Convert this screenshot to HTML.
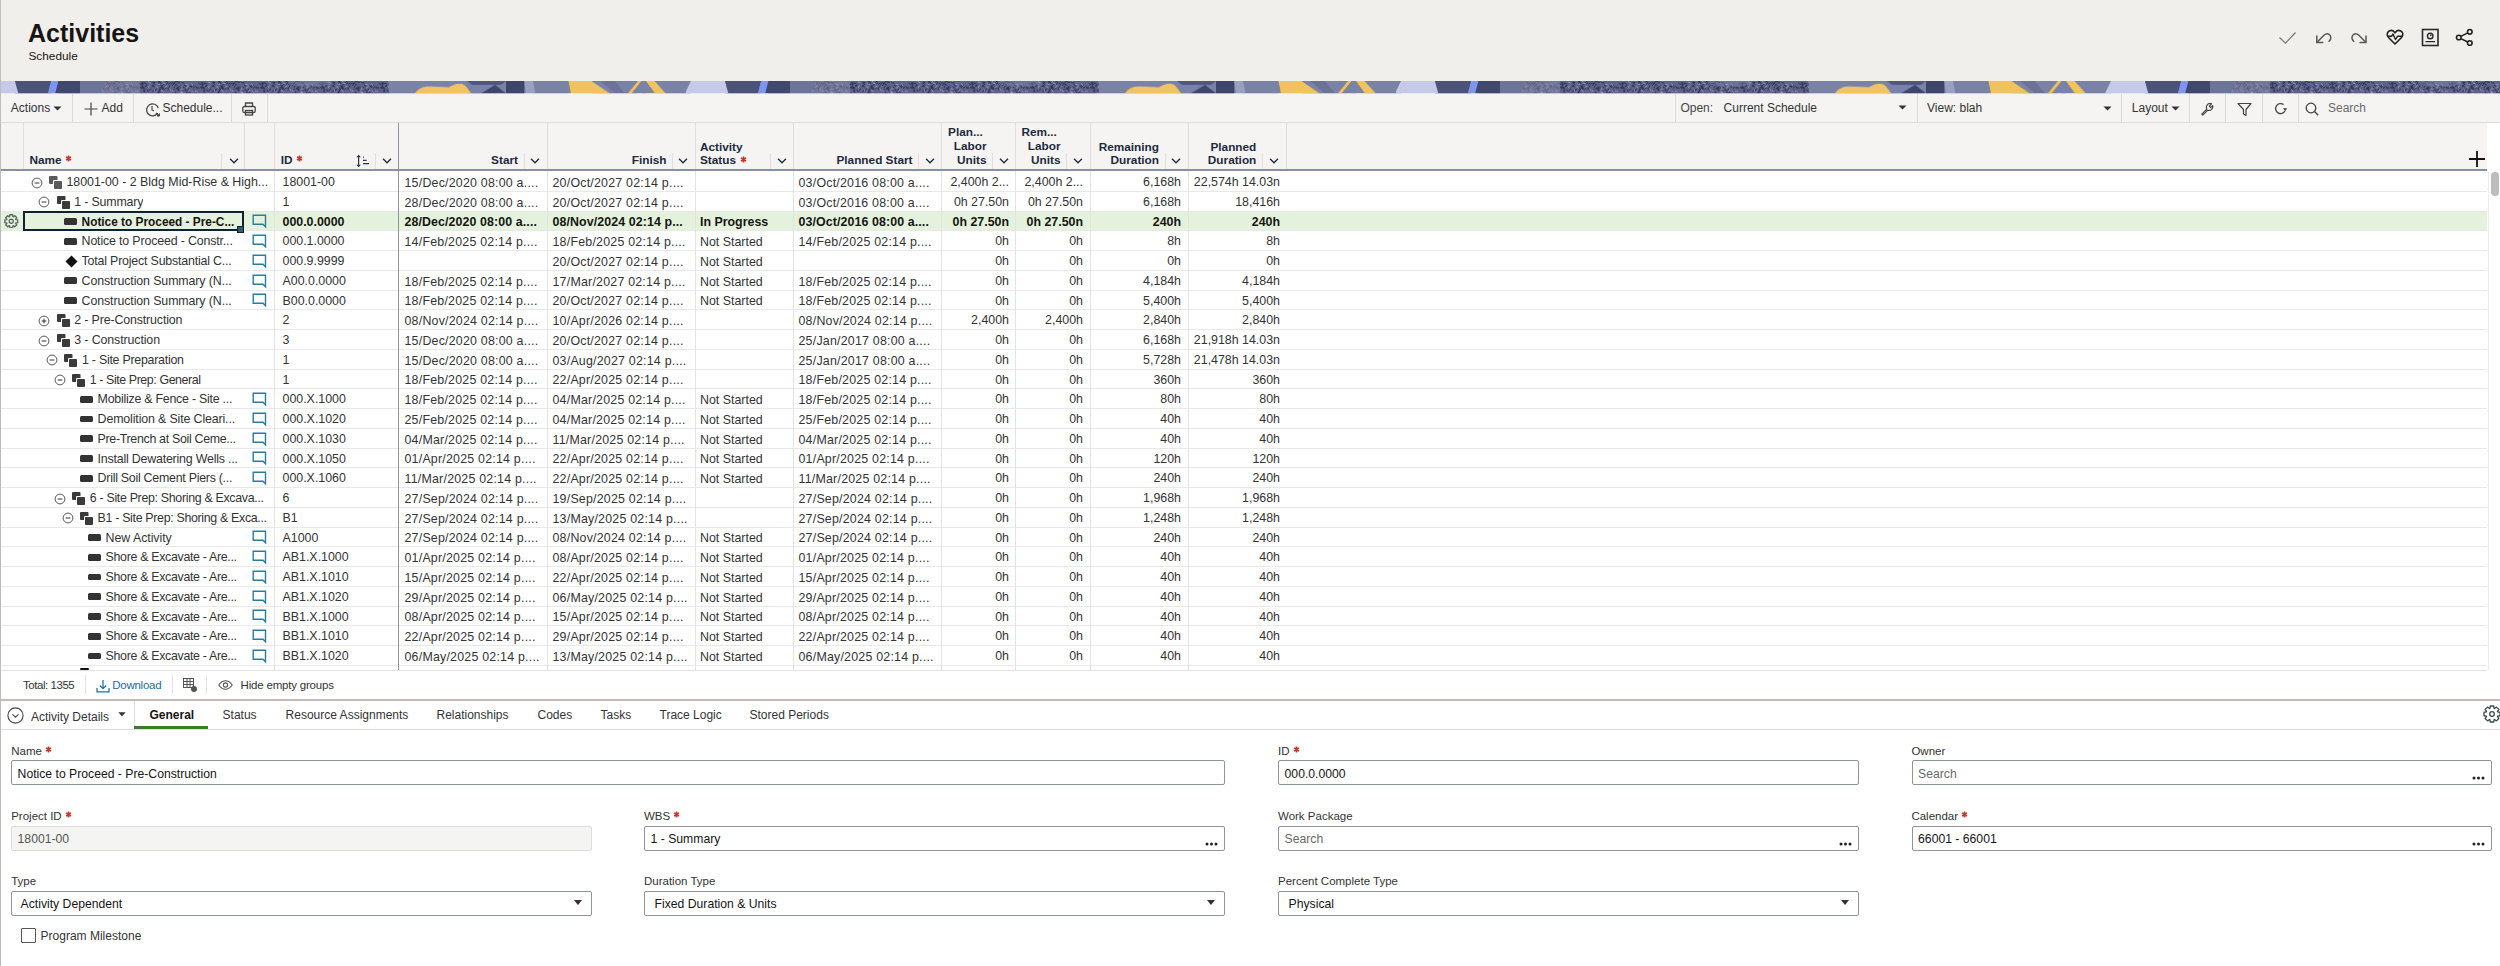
<!DOCTYPE html>
<html><head><meta charset="utf-8"><title>Activities</title>
<style>
*{box-sizing:border-box;margin:0;padding:0}
html,body{width:2500px;height:966px;overflow:hidden;background:#fff;font-family:"Liberation Sans",sans-serif;color:#333}
.abs{position:absolute}
#ph{position:absolute;left:0;top:0;width:2500px;height:82px;background:#f1efec}
#ph h1{position:absolute;left:28px;top:19.3px;font-size:25px;font-weight:bold;color:#161513;letter-spacing:0}
#ph .sub{position:absolute;left:28.5px;top:49px;font-size:11.8px;color:#161513}
#banner{position:absolute;left:0;top:81.4px;width:2500px;height:12.4px}
#tb{position:absolute;left:0;top:94px;width:2500px;height:28.5px;background:#f5f4f2;border-bottom:1px solid #dedcda}
.sep{position:absolute;width:1px;background:#dddbd8}
.tbt{position:absolute;font-size:12px;color:#333;white-space:nowrap}
#lb{position:absolute;left:0;top:0;width:1px;height:966px;background:#bdbdbd;z-index:50}
#th{position:absolute;left:0;top:122.5px;width:2487px;height:47.5px;background:#f5f4f2}
#thb{position:absolute;left:0;top:169.3px;width:2487px;height:2px;background:#87909c}
.hd{position:absolute;font-size:11.8px;font-weight:bold;color:#1d2a3d;line-height:13.7px;white-space:nowrap}
.hd .rq{color:#c7402e;font-size:15px;position:relative;top:2px;line-height:0}
.chev{position:absolute;top:155px;width:10px;height:8px}
.hsub{position:absolute;top:152px;height:18px;width:1px;background:#e0dedb}
.hcl{position:absolute;top:122.5px;height:47px;width:1px;background:#e1dfdc}
#tbody{position:absolute;left:0;top:171.3px;width:2487px;height:499px;overflow:hidden;background:#fff}
.row{position:absolute;left:0;width:2487px;height:19.75px;border-bottom:1px solid #e8e8e8;font-size:12.4px;color:#333}
.row.sel{background:#e4f1dc;font-weight:bold;color:#161513}
.row span{position:absolute;top:3px;white-space:nowrap;line-height:14px}
.bcl{position:absolute;top:0;height:499px;width:1px;background:#e3e3e3;z-index:5}
.row .tg{position:absolute;top:4.5px}
.row .wi{position:absolute;top:4px}
.row .ab{position:absolute;top:6.5px;width:13px;height:6.8px;border-radius:1.5px;background:#333}
.row .msi{position:absolute;top:3.5px}
.row .cm{position:absolute;left:251.5px;top:2.8px}
.c.id{left:282.5px}
.c.st{left:404.5px}
.c.fi{left:552.5px}
.c.as{left:700px}
.c.ps{left:798.5px}
.c.r{text-align:right}
.c.pl{right:1478px}
.c.rl{right:1404px}
.c.rd{right:1306px}
.c.pd{right:1207px}
#ft{position:absolute;left:0;top:670.5px;width:2500px;height:29px;background:#fff}
#ftb{position:absolute;left:0;top:698.8px;width:2500px;height:2px;background:#c2bbb7}
#tabs{position:absolute;left:0;top:700.7px;width:2500px;height:29px;background:#fff;border-bottom:1px solid #dcdcdc}
.tab{position:absolute;top:7px;font-size:12px;color:#333;white-space:nowrap}
.lbl{position:absolute;font-size:11.5px;color:#333;white-space:nowrap}
.lbl .rq{color:#c7402e;font-size:14px;line-height:0;position:relative;top:1px}
.inp{position:absolute;height:25.4px;border:1px solid #8f9496;border-radius:2px;background:#fff;font-size:12.2px;color:#161513;padding:5.8px 0 0 5.6px;white-space:nowrap}
.inp.dis{background:#f4f4f3;border-color:#dcdcdc;color:#555}
.dots{position:absolute;right:6px;top:15px;width:13px;height:4px}
.caret{position:absolute;right:9px;top:8.5px;width:0;height:0;border-left:4.5px solid transparent;border-right:4.5px solid transparent;border-top:5px solid #333}

.row .nm{overflow:hidden}
#sb{position:absolute;left:2490.5px;top:172px;width:8.5px;height:24px;border-radius:4.5px;background:#bdbdbd}
.row .c.st,.row .c.fi,.row .c.ps{letter-spacing:0.22px}
.row.sel .c.st,.row.sel .c.fi,.row.sel .c.ps{letter-spacing:0.1px}

.row .c.st,.row .c.fi,.row .c.ps,.row .c.as{top:3.7px}

</style></head><body>
<div id="lb"></div>
<div id="ph">
  <h1>Activities</h1>
  <div class="sub">Schedule</div>
  <svg class="abs" style="left:2270px;top:22px" width="220" height="32" viewBox="2270 22 220 32">
    <path d="M2279.5 37.5L2285.5 43.2L2295.5 32.5" fill="none" stroke="#7a7a7a" stroke-width="1.3"/>
    <g fill="none" stroke="#585858" stroke-width="1.5">
      <path d="M2316.8 35.5V42.4H2323.3"/>
      <path d="M2317 42.2L2324.2 35C2326.2 33 2329 33.3 2330.2 35.5C2331.3 37.5 2330.8 39.8 2328.6 41.8"/>
      <path d="M2366 35.5V42.4H2359.5"/>
      <path d="M2365.8 42.2L2358.6 35C2356.6 33 2353.8 33.3 2352.6 35.5C2351.5 37.5 2352 39.8 2354.2 41.8"/>
    </g>
    <path d="M2395 44L2388.5 37.5C2386.5 35.5 2386.8 32.2 2389.2 31C2391.5 29.8 2393.8 30.8 2395 32.8C2396.2 30.8 2398.5 29.8 2400.8 31C2403.2 32.2 2403.5 35.5 2401.5 37.5Z" fill="none" stroke="#222" stroke-width="1.6" stroke-linejoin="round"/>
    <path d="M2388 36.3H2391.5L2393 34L2395.5 39.5L2397.5 36.3H2402" fill="none" stroke="#222" stroke-width="1.4" stroke-linejoin="round"/>
    <rect x="2422.5" y="29.5" width="15.5" height="16" fill="none" stroke="#2a2a2a" stroke-width="1.6"/>
    <circle cx="2430.2" cy="36" r="2.8" fill="none" stroke="#2a2a2a" stroke-width="1.4"/>
    <path d="M2430.2 36L2431.5 34.6M2425.5 41.7H2435" stroke="#2a2a2a" stroke-width="1.3"/>
    <g fill="none" stroke="#222" stroke-width="1.6">
      <circle cx="2458.8" cy="37.5" r="2.3"/><circle cx="2469.8" cy="31.8" r="2.3"/><circle cx="2469.8" cy="43" r="2.3"/>
      <path d="M2460.8 36.4L2467.8 32.9M2460.8 38.6L2467.8 42"/>
    </g>
  </svg>
</div>
<svg id="banner" width="2500" height="13" viewBox="0 0 2500 13" preserveAspectRatio="none">
  <defs>
    <pattern id="tx" x="0" y="0" width="60" height="13" patternUnits="userSpaceOnUse"><rect width="60" height="13" fill="#5c628a"/><path d="M19.4 2.0l2 -2M2.9 10.7l2.5 -1.5M21.9 0.8l3 0.8M12.9 1.1l-1.5 2.5M4.2 1.2l-1.5 2.5M3.5 7.4l2.5 1.5M37.8 7.6l2.5 -1.5M34.6 5.2l2.5 1.5M2.8 11.2l1.5 2.5M25.1 7.0l3 0.8M18.5 10.6l2.5 1.5M6.2 7.4l2.5 1.5M22.3 7.1l2.5 -1.5M33.9 8.0l-1.5 2.5M40.8 5.6l1.5 2.5M27.9 12.0l1.5 2.5M18.0 10.3l2 -2M46.8 1.1l1.5 2.5M31.5 11.4l2 -2M26.9 7.9l2.5 -1.5M7.1 5.4l1.5 2.5M9.1 6.4l2.5 -1.5M57.7 1.0l3 0.8M34.4 11.4l1.5 2.5M20.4 4.6l-1.5 2.5M34.8 5.9l2.5 -1.5M56.7 6.2l2 -2M3.9 9.5l1.5 2.5M38.8 12.9l-1.5 2.5M17.1 5.0l2 -2M20.8 12.2l1.5 2.5M10.1 1.5l2.5 -1.5M13.1 3.7l2 -2M14.9 5.1l-1.5 2.5M4.8 5.8l3 0.8M16.7 1.8l-1.5 2.5M51.8 3.6l-1.5 2.5M59.2 8.9l-1.5 2.5M57.5 2.0l2.5 1.5M9.1 8.6l2.5 -1.5M29.1 7.7l1.5 2.5M16.9 1.9l3 0.8M22.2 7.4l2.5 1.5M41.4 6.7l3 0.8M39.3 9.6l-1.5 2.5M54.0 10.1l2 -2M47.9 5.1l-1.5 2.5M23.6 6.3l-1.5 2.5M3.7 0.9l2.5 1.5M26.4 1.4l3 0.8M3.2 0.0l2.5 1.5M32.2 12.3l3 0.8M1.5 11.4l3 0.8M22.6 8.2l1.5 2.5M36.1 6.2l2.5 -1.5M50.9 12.9l-1.5 2.5M28.8 4.1l2.5 1.5M6.1 4.5l1.5 2.5M28.7 9.0l3 0.8M1.4 12.4l3 0.8M21.7 9.0l2.5 -1.5M45.5 3.9l2 -2M51.8 9.1l1.5 2.5M31.1 11.8l1.5 2.5M46.3 6.9l3 0.8M19.8 2.9l2.5 1.5M48.4 10.6l2 -2M48.2 2.6l-1.5 2.5M21.3 0.4l2.5 -1.5M47.4 6.1l2.5 1.5M41.6 12.4l-1.5 2.5M48.5 9.4l1.5 2.5M57.3 4.7l2.5 1.5M6.1 6.1l1.5 2.5M12.3 8.1l3 0.8M50.4 6.2l2 -2M20.6 8.4l2 -2M7.2 5.1l2 -2M45.0 6.2l2.5 1.5M26.0 8.3l2.5 -1.5M48.0 12.6l-1.5 2.5M27.8 9.7l2.5 -1.5M43.5 2.2l2.5 1.5M1.7 7.7l-1.5 2.5M48.4 1.9l3 0.8" stroke="#2a2f4d" stroke-width="1"/><path d="M58.8 8.5l1.5 2.5M9.4 7.1l2.5 -1.5M0.9 12.6l2 -2M6.2 9.7l2.5 1.5M26.0 11.3l2.5 1.5M1.7 2.8l3 0.8M14.4 7.6l1.5 2.5M32.7 10.8l2.5 -1.5M54.6 4.6l-1.5 2.5M39.7 10.6l3 0.8M25.2 11.9l3 0.8M7.8 2.0l3 0.8M1.1 5.7l2.5 1.5M36.5 10.1l2.5 1.5M10.3 6.2l2 -2M7.2 0.8l2 -2M31.1 7.2l2.5 -1.5M53.0 0.7l2.5 1.5M16.6 10.0l3 0.8M27.1 0.4l2.5 -1.5M26.6 8.0l3 0.8M36.4 2.6l1.5 2.5M27.1 6.9l-1.5 2.5M30.5 3.2l3 0.8M52.6 12.2l1.5 2.5" stroke="#a3a9c6" stroke-width="0.8"/></pattern>
    <pattern id="bp" x="-25" y="0" width="710" height="13" patternUnits="userSpaceOnUse">
      <rect x="0" y="0" width="710" height="13" fill="#7a82a5"/>
      <path d="M6 0H40L43.4 13H0Z" fill="#c4cae8"/>
      <path d="M40 0H76.2L73 13H43.4Z" fill="#4c5379"/>
      <path d="M76.2 0H83.4L80.2 13H73Z" fill="#7f95f0"/>
      <path d="M83.4 0H105V13H80.2Z" fill="#414870"/>
      <path d="M105 0H131.4L126 13H105Z" fill="#6d7499"/>
      <path d="M131.4 0H165V13H126Z" fill="#878cab"/><path d="M131.4 0H165V13H126Z" fill="url(#tx)" opacity="0.5"/>
      <rect x="165" y="0" width="249" height="13" fill="url(#tx)"/>
      <ellipse cx="335" cy="2" rx="22" ry="4" fill="#8c92b3" opacity="0.35"/>
      <path d="M440 13C444 7 449 5.5 456 5.8L474 6.5C479 3.5 485 1.5 489 4C492 6 494 10 496 13Z" fill="#f0c462"/>
      <path d="M491.8 0H531L526 4H497Z" fill="#4f5680"/>
      <path d="M506 13L520 4L531 13Z" fill="#3f466d"/>
      <rect x="531" y="0" width="18.3" height="13" fill="#3e456c"/>
      <path d="M549.3 0H558L560.5 13H551Z" fill="#9aa0c0"/>
      <path d="M593.4 0H616.5L634.7 13H596Z" fill="#f1c35d"/>
      <path d="M625 0H640L650 13H640Z" fill="#6c7397"/>
      <path d="M663 0H666.5L656.5 13H653Z" fill="#f1c35d"/>
      <path d="M671 0H679.5L690.7 13H680Z" fill="#f1c35d"/>
    </pattern>
  </defs>
  <rect x="0" y="0" width="2500" height="13" fill="url(#bp)"/>
</svg>
<div id="tb">
  <span class="tbt" style="left:10.8px;top:7px">Actions</span>
  <svg class="abs" style="left:53px;top:12px" width="9" height="5"><path d="M0.5 0.5H8.5L4.5 4.5Z" fill="#333"/></svg>
  <div class="sep" style="left:72px;top:0;height:28px"></div>
  <svg class="abs" style="left:84px;top:8px" width="14" height="14"><path d="M7 0.5V13.5M0.5 7H13.5" stroke="#444" stroke-width="1.2"/></svg>
  <span class="tbt" style="left:101.6px;top:7px">Add</span>
  <div class="sep" style="left:133px;top:0;height:28px"></div>
  <svg class="abs" style="left:144.5px;top:7.5px" width="16" height="16" viewBox="0 0 16 16"><path d="M12.6 11.2A6 6 0 1 1 13.3 6" fill="none" stroke="#444" stroke-width="1.3"/><path d="M7 4V8L9 9" fill="none" stroke="#444" stroke-width="1.2"/><path d="M11 11L14 14" stroke="#444" stroke-width="1.5"/><path d="M12 14H14.5V11.5" fill="#444" stroke="#444" stroke-width="1"/></svg>
  <span class="tbt" style="left:162.5px;top:7px">Schedule...</span>
  <div class="sep" style="left:231px;top:0;height:28px"></div>
  <svg class="abs" style="left:241.5px;top:7.5px" width="14" height="14" viewBox="0 0 14 14"><g fill="none" stroke="#444" stroke-width="1.3"><path d="M3.5 4.5V1H10.5V4.5"/><rect x="0.8" y="4.5" width="12.4" height="6" rx="1.5"/><rect x="3.5" y="8.5" width="7" height="4.5"/></g></svg>
  <div class="sep" style="left:267px;top:0;height:28px"></div>

  <div class="sep" style="left:1675px;top:0;height:28px"></div>
  <span class="tbt" style="left:1680.4px;top:7px;color:#444">Open:</span>
  <span class="tbt" style="left:1723.6px;top:7px">Current Schedule</span>
  <svg class="abs" style="left:1898px;top:10.5px" width="9" height="5"><path d="M0.5 0.5H8.5L4.5 4.5Z" fill="#333"/></svg>
  <div class="sep" style="left:1916.5px;top:0;height:28px"></div>
  <span class="tbt" style="left:1927px;top:7px">View: blah</span>
  <svg class="abs" style="left:2102.5px;top:12px" width="9" height="5"><path d="M0.5 0.5H8.5L4.5 4.5Z" fill="#333"/></svg>
  <div class="sep" style="left:2121px;top:0;height:28px"></div>
  <span class="tbt" style="left:2131.8px;top:7px">Layout</span>
  <svg class="abs" style="left:2170.5px;top:12px" width="9" height="5"><path d="M0.5 0.5H8.5L4.5 4.5Z" fill="#333"/></svg>
  <div class="sep" style="left:2188.5px;top:0;height:28px"></div>
  <svg class="abs" style="left:2200px;top:7.5px" width="15" height="15" viewBox="0 0 15 15"><path d="M1.8 12.2L6.8 7.2A3.8 3.8 0 0 1 11.5 1.8L9.3 4L10.6 5.7L12.7 3.6A3.8 3.8 0 0 1 7.8 8.2L2.8 13.2Z" fill="none" stroke="#444" stroke-width="1.2" stroke-linejoin="round"/></svg>
  <div class="sep" style="left:2225px;top:0;height:28px"></div>
  <svg class="abs" style="left:2236.5px;top:7.5px" width="15" height="15" viewBox="0 0 15 15"><path d="M1 1.5H14L9 7.5V13.5L6.5 12V7.5Z" fill="none" stroke="#444" stroke-width="1.2" stroke-linejoin="round"/></svg>
  <div class="sep" style="left:2262px;top:0;height:28px"></div>
  <svg class="abs" style="left:2273px;top:8px" width="15" height="14" viewBox="0 0 15 14"><path d="M10.6 2.6A5 5 0 1 0 12 9" fill="none" stroke="#444" stroke-width="1.3"/><path d="M10 6.3H14.2L12.1 9.2Z" fill="#444"/></svg>
  <div class="sep" style="left:2298px;top:0;height:28px"></div>
  <svg class="abs" style="left:2304.5px;top:8px" width="15" height="15" viewBox="0 0 15 15"><circle cx="6" cy="6" r="4.8" fill="none" stroke="#444" stroke-width="1.3"/><path d="M9.5 9.5L13.2 13.2" stroke="#444" stroke-width="1.4"/></svg>
  <span class="tbt" style="left:2328px;top:7px;color:#6a6a6a">Search</span>
</div>

<div id="th">
<div class="abs" style="left:23.0px;top:0;width:1px;height:47px;background:#e0dedb"></div>
<div class="abs" style="left:244.2px;top:0;width:1px;height:47px;background:#e0dedb"></div>
<div class="abs" style="left:274.4px;top:0;width:1px;height:47px;background:#e0dedb"></div>
<div class="abs" style="left:547.4px;top:0;width:1px;height:47px;background:#e0dedb"></div>
<div class="abs" style="left:695.0px;top:0;width:1px;height:47px;background:#e0dedb"></div>
<div class="abs" style="left:793.0px;top:0;width:1px;height:47px;background:#e0dedb"></div>
<div class="abs" style="left:941.0px;top:0;width:1px;height:47px;background:#e0dedb"></div>
<div class="abs" style="left:1015.0px;top:0;width:1px;height:47px;background:#e0dedb"></div>
<div class="abs" style="left:1089.5px;top:0;width:1px;height:47px;background:#e0dedb"></div>
<div class="abs" style="left:1187.5px;top:0;width:1px;height:47px;background:#e0dedb"></div>
<div class="abs" style="left:1286.0px;top:0;width:1px;height:47px;background:#e0dedb"></div>
<div class="abs" style="left:398px;top:0;width:1.3px;height:48px;background:#8c95a1"></div>
<div class="abs" style="left:221.4px;top:30px;width:1px;height:16px;background:#e2e0dd"></div>
<svg class="abs" style="left:228.5px;top:35.8px" width="10" height="6" viewBox="0 0 10 6"><path d="M1 0.8L5 4.8L9 0.8" fill="none" stroke="#1d2a3d" stroke-width="1.3"/></svg>
<div class="abs" style="left:374.8px;top:30px;width:1px;height:16px;background:#e2e0dd"></div>
<svg class="abs" style="left:381.5px;top:35.8px" width="10" height="6" viewBox="0 0 10 6"><path d="M1 0.8L5 4.8L9 0.8" fill="none" stroke="#1d2a3d" stroke-width="1.3"/></svg>
<div class="abs" style="left:523.6px;top:30px;width:1px;height:16px;background:#e2e0dd"></div>
<svg class="abs" style="left:530.0px;top:35.8px" width="10" height="6" viewBox="0 0 10 6"><path d="M1 0.8L5 4.8L9 0.8" fill="none" stroke="#1d2a3d" stroke-width="1.3"/></svg>
<div class="abs" style="left:671.5px;top:30px;width:1px;height:16px;background:#e2e0dd"></div>
<svg class="abs" style="left:678.0px;top:35.8px" width="10" height="6" viewBox="0 0 10 6"><path d="M1 0.8L5 4.8L9 0.8" fill="none" stroke="#1d2a3d" stroke-width="1.3"/></svg>
<div class="abs" style="left:770.0px;top:30px;width:1px;height:16px;background:#e2e0dd"></div>
<svg class="abs" style="left:776.5px;top:35.8px" width="10" height="6" viewBox="0 0 10 6"><path d="M1 0.8L5 4.8L9 0.8" fill="none" stroke="#1d2a3d" stroke-width="1.3"/></svg>
<div class="abs" style="left:918.0px;top:30px;width:1px;height:16px;background:#e2e0dd"></div>
<svg class="abs" style="left:924.5px;top:35.8px" width="10" height="6" viewBox="0 0 10 6"><path d="M1 0.8L5 4.8L9 0.8" fill="none" stroke="#1d2a3d" stroke-width="1.3"/></svg>
<div class="abs" style="left:992.0px;top:30px;width:1px;height:16px;background:#e2e0dd"></div>
<svg class="abs" style="left:998.5px;top:35.8px" width="10" height="6" viewBox="0 0 10 6"><path d="M1 0.8L5 4.8L9 0.8" fill="none" stroke="#1d2a3d" stroke-width="1.3"/></svg>
<div class="abs" style="left:1066.0px;top:30px;width:1px;height:16px;background:#e2e0dd"></div>
<svg class="abs" style="left:1072.5px;top:35.8px" width="10" height="6" viewBox="0 0 10 6"><path d="M1 0.8L5 4.8L9 0.8" fill="none" stroke="#1d2a3d" stroke-width="1.3"/></svg>
<div class="abs" style="left:1165.0px;top:30px;width:1px;height:16px;background:#e2e0dd"></div>
<svg class="abs" style="left:1171.0px;top:35.8px" width="10" height="6" viewBox="0 0 10 6"><path d="M1 0.8L5 4.8L9 0.8" fill="none" stroke="#1d2a3d" stroke-width="1.3"/></svg>
<div class="abs" style="left:1262.2px;top:30px;width:1px;height:16px;background:#e2e0dd"></div>
<svg class="abs" style="left:1268.8px;top:35.8px" width="10" height="6" viewBox="0 0 10 6"><path d="M1 0.8L5 4.8L9 0.8" fill="none" stroke="#1d2a3d" stroke-width="1.3"/></svg>
<div class="hd" style="top:31.0px;left:29.4px;">Name <svg width="7" height="7" viewBox="0 0 7 7" style="vertical-align:top;position:relative;top:1.5px;margin-left:0.5px"><path d="M3.5 0.6V6.4M1 2L6 5M1 5L6 2" stroke="#c0392b" stroke-width="1.7"/></svg></div>
<div class="hd" style="top:31.0px;left:280.7px;">ID <svg width="7" height="7" viewBox="0 0 7 7" style="vertical-align:top;position:relative;top:1.5px;margin-left:0.5px"><path d="M3.5 0.6V6.4M1 2L6 5M1 5L6 2" stroke="#c0392b" stroke-width="1.7"/></svg></div>
<svg class="abs" style="left:354.5px;top:31.5px" width="15" height="14" viewBox="0 0 15 14"><path d="M3.6 1.5V12.5" stroke="#2a3547" stroke-width="1.2"/><path d="M1.3 3.3L3.6 0.8L5.9 3.3ZM1.3 10.7L3.6 13.2L5.9 10.7Z" fill="#2a3547"/><path d="M8 3.2H9M8 6.3H11.5M8 9.6H14" stroke="#2a3547" stroke-width="1.2"/></svg>
<div class="hd" style="top:31.0px;right:1969.0px;text-align:right;">Start</div>
<div class="hd" style="top:31.0px;right:1820.5px;text-align:right;">Finish</div>
<div class="hd" style="top:18.0px;left:700.0px;">Activity<br>Status <svg width="7" height="7" viewBox="0 0 7 7" style="vertical-align:top;position:relative;top:1.5px;margin-left:0.5px"><path d="M3.5 0.6V6.4M1 2L6 5M1 5L6 2" stroke="#c0392b" stroke-width="1.7"/></svg></div>
<div class="hd" style="top:31.0px;right:1574.5px;text-align:right;">Planned Start</div>
<div class="hd" style="top:3.8px;right:1500.5px;text-align:right;"><span style="margin-right:3.7px">Plan...</span><br>Labor<br>Units</div>
<div class="hd" style="top:3.8px;right:1426.5px;text-align:right;"><span style="margin-right:3.7px">Rem...</span><br>Labor<br>Units</div>
<div class="hd" style="top:18.0px;right:1328.0px;text-align:right;">Remaining<br>Duration</div>
<div class="hd" style="top:18.0px;right:1230.7px;text-align:right;">Planned<br>Duration</div>
<svg class="abs" style="left:2468px;top:27.5px" width="18" height="18" viewBox="0 0 18 18"><path d="M9 1V17M1 9H17" stroke="#111" stroke-width="1.8"/></svg>
</div>
<div id="thb"></div>
<div id="tbody">
<div class="bcl" style="left:274.4px"></div>
<div class="bcl" style="left:547.4px"></div>
<div class="bcl" style="left:695.0px"></div>
<div class="bcl" style="left:793.0px"></div>
<div class="bcl" style="left:941.0px"></div>
<div class="bcl" style="left:1015.0px"></div>
<div class="bcl" style="left:1089.5px"></div>
<div class="bcl" style="left:1187.5px"></div>
<div class="bcl" style="left:398px;width:1.3px;background:#8c95a1"></div>
<div class="row" style="top:0.90px"><svg class="tg" style="left:30.6px" width="12" height="12" viewBox="0 0 12 12"><circle cx="6" cy="6" r="4.9" fill="none" stroke="#5a5a5a" stroke-width="1"/><path d="M3.6 6h4.8" stroke="#333" stroke-width="1"/></svg><svg class="wi" style="left:48.8px" width="14" height="14" viewBox="0 0 14 14"><rect x="0" y="0" width="8.5" height="8" rx="1" fill="#5a5a5a"/><rect x="4" y="4" width="9" height="9" rx="1" fill="#fff"/><rect x="5" y="5" width="8" height="8" rx="1" fill="#5a5a5a"/></svg><span class="nm" style="left:66.4px;max-width:202.9px;letter-spacing:0px">18001-00 - 2 Bldg Mid-Rise &amp; High...</span><span class="c id">18001-00</span><span class="c st">15/Dec/2020 08:00 a....</span><span class="c fi">20/Oct/2027 02:14 p....</span><span class="c as"></span><span class="c ps">03/Oct/2016 08:00 a....</span><span class="c r pl">2,400h 2...</span><span class="c r rl">2,400h 2...</span><span class="c r rd">6,168h</span><span class="c r pd">22,574h 14.03n</span></div>
<div class="row" style="top:20.65px"><svg class="tg" style="left:38.4px" width="12" height="12" viewBox="0 0 12 12"><circle cx="6" cy="6" r="4.9" fill="none" stroke="#5a5a5a" stroke-width="1"/><path d="M3.6 6h4.8" stroke="#333" stroke-width="1"/></svg><svg class="wi" style="left:56.6px" width="14" height="14" viewBox="0 0 14 14"><rect x="0" y="0" width="8.5" height="8" rx="1" fill="#3a3a3a"/><rect x="4" y="4" width="9" height="9" rx="1" fill="#fff"/><rect x="5" y="5" width="8" height="8" rx="1" fill="#3a3a3a"/></svg><span class="nm" style="left:74.2px;max-width:195.1px;letter-spacing:-0.17px">1 - Summary</span><span class="c id">1</span><span class="c st">28/Dec/2020 08:00 a....</span><span class="c fi">20/Oct/2027 02:14 p....</span><span class="c as"></span><span class="c ps">03/Oct/2016 08:00 a....</span><span class="c r pl">0h 27.50n</span><span class="c r rl">0h 27.50n</span><span class="c r rd">6,168h</span><span class="c r pd">18,416h</span></div>
<div class="row sel" style="top:40.40px"><span class="ab" style="left:64.3px"></span><span class="nm" style="left:81.6px;font-size:11.85px;letter-spacing:0px">Notice to Proceed - Pre-C...</span><svg class="cm" width="15" height="15" viewBox="0 0 15 15"><path d="M1.2 1.2H13.5V12.8L11 10.2H1.2Z" fill="none" stroke="#2a7c9c" stroke-width="1.4" stroke-linejoin="miter"/></svg><span class="c id">000.0.0000</span><span class="c st">28/Dec/2020 08:00 a....</span><span class="c fi">08/Nov/2024 02:14 p...</span><span class="c as">In Progress</span><span class="c ps">03/Oct/2016 08:00 a....</span><span class="c r pl">0h 27.50n</span><span class="c r rl">0h 27.50n</span><span class="c r rd">240h</span><span class="c r pd">240h</span></div>
<div class="row" style="top:60.15px"><span class="ab" style="left:64.3px"></span><span class="nm" style="left:81.6px;letter-spacing:-0.157px">Notice to Proceed - Constr...</span><svg class="cm" width="15" height="15" viewBox="0 0 15 15"><path d="M1.2 1.2H13.5V12.8L11 10.2H1.2Z" fill="none" stroke="#2a7c9c" stroke-width="1.4" stroke-linejoin="miter"/></svg><span class="c id">000.1.0000</span><span class="c st">14/Feb/2025 02:14 p....</span><span class="c fi">18/Feb/2025 02:14 p....</span><span class="c as">Not Started</span><span class="c ps">14/Feb/2025 02:14 p....</span><span class="c r pl">0h</span><span class="c r rl">0h</span><span class="c r rd">8h</span><span class="c r pd">8h</span></div>
<div class="row" style="top:79.90px"><svg class="msi" style="left:64.8px" width="13" height="13" viewBox="0 0 13 13"><path d="M6.5 0.5L12.5 6.5L6.5 12.5L0.5 6.5Z" fill="#111"/></svg><span class="nm" style="left:81.6px;letter-spacing:-0.19px">Total Project Substantial C...</span><svg class="cm" width="15" height="15" viewBox="0 0 15 15"><path d="M1.2 1.2H13.5V12.8L11 10.2H1.2Z" fill="none" stroke="#2a7c9c" stroke-width="1.4" stroke-linejoin="miter"/></svg><span class="c id">000.9.9999</span><span class="c st"></span><span class="c fi">20/Oct/2027 02:14 p....</span><span class="c as">Not Started</span><span class="c ps"></span><span class="c r pl">0h</span><span class="c r rl">0h</span><span class="c r rd">0h</span><span class="c r pd">0h</span></div>
<div class="row" style="top:99.65px"><span class="ab" style="left:64.3px"></span><span class="nm" style="left:81.6px;letter-spacing:-0.108px">Construction Summary (N...</span><svg class="cm" width="15" height="15" viewBox="0 0 15 15"><path d="M1.2 1.2H13.5V12.8L11 10.2H1.2Z" fill="none" stroke="#2a7c9c" stroke-width="1.4" stroke-linejoin="miter"/></svg><span class="c id">A00.0.0000</span><span class="c st">18/Feb/2025 02:14 p....</span><span class="c fi">17/Mar/2027 02:14 p....</span><span class="c as">Not Started</span><span class="c ps">18/Feb/2025 02:14 p....</span><span class="c r pl">0h</span><span class="c r rl">0h</span><span class="c r rd">4,184h</span><span class="c r pd">4,184h</span></div>
<div class="row" style="top:119.40px"><span class="ab" style="left:64.3px"></span><span class="nm" style="left:81.6px;letter-spacing:-0.108px">Construction Summary (N...</span><svg class="cm" width="15" height="15" viewBox="0 0 15 15"><path d="M1.2 1.2H13.5V12.8L11 10.2H1.2Z" fill="none" stroke="#2a7c9c" stroke-width="1.4" stroke-linejoin="miter"/></svg><span class="c id">B00.0.0000</span><span class="c st">18/Feb/2025 02:14 p....</span><span class="c fi">20/Oct/2027 02:14 p....</span><span class="c as">Not Started</span><span class="c ps">18/Feb/2025 02:14 p....</span><span class="c r pl">0h</span><span class="c r rl">0h</span><span class="c r rd">5,400h</span><span class="c r pd">5,400h</span></div>
<div class="row" style="top:139.15px"><svg class="tg" style="left:38.4px" width="12" height="12" viewBox="0 0 12 12"><circle cx="6" cy="6" r="4.9" fill="none" stroke="#5a5a5a" stroke-width="1"/><path d="M3.6 6h4.8M6 3.6v4.8" stroke="#333" stroke-width="1"/></svg><svg class="wi" style="left:56.6px" width="14" height="14" viewBox="0 0 14 14"><rect x="0" y="0" width="8.5" height="8" rx="1" fill="#3a3a3a"/><rect x="4" y="4" width="9" height="9" rx="1" fill="#fff"/><rect x="5" y="5" width="8" height="8" rx="1" fill="#3a3a3a"/></svg><span class="nm" style="left:74.2px;max-width:195.1px;letter-spacing:-0.137px">2 - Pre-Construction</span><span class="c id">2</span><span class="c st">08/Nov/2024 02:14 p....</span><span class="c fi">10/Apr/2026 02:14 p....</span><span class="c as"></span><span class="c ps">08/Nov/2024 02:14 p....</span><span class="c r pl">2,400h</span><span class="c r rl">2,400h</span><span class="c r rd">2,840h</span><span class="c r pd">2,840h</span></div>
<div class="row" style="top:158.90px"><svg class="tg" style="left:38.4px" width="12" height="12" viewBox="0 0 12 12"><circle cx="6" cy="6" r="4.9" fill="none" stroke="#5a5a5a" stroke-width="1"/><path d="M3.6 6h4.8" stroke="#333" stroke-width="1"/></svg><svg class="wi" style="left:56.6px" width="14" height="14" viewBox="0 0 14 14"><rect x="0" y="0" width="8.5" height="8" rx="1" fill="#3a3a3a"/><rect x="4" y="4" width="9" height="9" rx="1" fill="#fff"/><rect x="5" y="5" width="8" height="8" rx="1" fill="#3a3a3a"/></svg><span class="nm" style="left:74.2px;max-width:195.1px;letter-spacing:-0.107px">3 - Construction</span><span class="c id">3</span><span class="c st">15/Dec/2020 08:00 a....</span><span class="c fi">20/Oct/2027 02:14 p....</span><span class="c as"></span><span class="c ps">25/Jan/2017 08:00 a....</span><span class="c r pl">0h</span><span class="c r rl">0h</span><span class="c r rd">6,168h</span><span class="c r pd">21,918h 14.03n</span></div>
<div class="row" style="top:178.65px"><svg class="tg" style="left:46.2px" width="12" height="12" viewBox="0 0 12 12"><circle cx="6" cy="6" r="4.9" fill="none" stroke="#5a5a5a" stroke-width="1"/><path d="M3.6 6h4.8" stroke="#333" stroke-width="1"/></svg><svg class="wi" style="left:64.4px" width="14" height="14" viewBox="0 0 14 14"><rect x="0" y="0" width="8.5" height="8" rx="1" fill="#3a3a3a"/><rect x="4" y="4" width="9" height="9" rx="1" fill="#fff"/><rect x="5" y="5" width="8" height="8" rx="1" fill="#3a3a3a"/></svg><span class="nm" style="left:82.0px;max-width:187.3px;letter-spacing:-0.253px">1 - Site Preparation</span><span class="c id">1</span><span class="c st">15/Dec/2020 08:00 a....</span><span class="c fi">03/Aug/2027 02:14 p....</span><span class="c as"></span><span class="c ps">25/Jan/2017 08:00 a....</span><span class="c r pl">0h</span><span class="c r rl">0h</span><span class="c r rd">5,728h</span><span class="c r pd">21,478h 14.03n</span></div>
<div class="row" style="top:198.40px"><svg class="tg" style="left:54.0px" width="12" height="12" viewBox="0 0 12 12"><circle cx="6" cy="6" r="4.9" fill="none" stroke="#5a5a5a" stroke-width="1"/><path d="M3.6 6h4.8" stroke="#333" stroke-width="1"/></svg><svg class="wi" style="left:72.2px" width="14" height="14" viewBox="0 0 14 14"><rect x="0" y="0" width="8.5" height="8" rx="1" fill="#3a3a3a"/><rect x="4" y="4" width="9" height="9" rx="1" fill="#fff"/><rect x="5" y="5" width="8" height="8" rx="1" fill="#3a3a3a"/></svg><span class="nm" style="left:89.8px;max-width:179.5px;letter-spacing:-0.41px">1 - Site Prep: General</span><span class="c id">1</span><span class="c st">18/Feb/2025 02:14 p....</span><span class="c fi">22/Apr/2025 02:14 p....</span><span class="c as"></span><span class="c ps">18/Feb/2025 02:14 p....</span><span class="c r pl">0h</span><span class="c r rl">0h</span><span class="c r rd">360h</span><span class="c r pd">360h</span></div>
<div class="row" style="top:218.15px"><span class="ab" style="left:80.3px"></span><span class="nm" style="left:97.6px;letter-spacing:-0.246px">Mobilize &amp; Fence - Site ...</span><svg class="cm" width="15" height="15" viewBox="0 0 15 15"><path d="M1.2 1.2H13.5V12.8L11 10.2H1.2Z" fill="none" stroke="#2a7c9c" stroke-width="1.4" stroke-linejoin="miter"/></svg><span class="c id">000.X.1000</span><span class="c st">18/Feb/2025 02:14 p....</span><span class="c fi">04/Mar/2025 02:14 p....</span><span class="c as">Not Started</span><span class="c ps">18/Feb/2025 02:14 p....</span><span class="c r pl">0h</span><span class="c r rl">0h</span><span class="c r rd">80h</span><span class="c r pd">80h</span></div>
<div class="row" style="top:237.90px"><span class="ab" style="left:80.3px"></span><span class="nm" style="left:97.6px;letter-spacing:-0.138px">Demolition &amp; Site Cleari...</span><svg class="cm" width="15" height="15" viewBox="0 0 15 15"><path d="M1.2 1.2H13.5V12.8L11 10.2H1.2Z" fill="none" stroke="#2a7c9c" stroke-width="1.4" stroke-linejoin="miter"/></svg><span class="c id">000.X.1020</span><span class="c st">25/Feb/2025 02:14 p....</span><span class="c fi">04/Mar/2025 02:14 p....</span><span class="c as">Not Started</span><span class="c ps">25/Feb/2025 02:14 p....</span><span class="c r pl">0h</span><span class="c r rl">0h</span><span class="c r rd">40h</span><span class="c r pd">40h</span></div>
<div class="row" style="top:257.65px"><span class="ab" style="left:80.3px"></span><span class="nm" style="left:97.6px;letter-spacing:-0.312px">Pre-Trench at Soil Ceme...</span><svg class="cm" width="15" height="15" viewBox="0 0 15 15"><path d="M1.2 1.2H13.5V12.8L11 10.2H1.2Z" fill="none" stroke="#2a7c9c" stroke-width="1.4" stroke-linejoin="miter"/></svg><span class="c id">000.X.1030</span><span class="c st">04/Mar/2025 02:14 p....</span><span class="c fi">11/Mar/2025 02:14 p....</span><span class="c as">Not Started</span><span class="c ps">04/Mar/2025 02:14 p....</span><span class="c r pl">0h</span><span class="c r rl">0h</span><span class="c r rd">40h</span><span class="c r pd">40h</span></div>
<div class="row" style="top:277.40px"><span class="ab" style="left:80.3px"></span><span class="nm" style="left:97.6px;letter-spacing:-0.2px">Install Dewatering Wells ...</span><svg class="cm" width="15" height="15" viewBox="0 0 15 15"><path d="M1.2 1.2H13.5V12.8L11 10.2H1.2Z" fill="none" stroke="#2a7c9c" stroke-width="1.4" stroke-linejoin="miter"/></svg><span class="c id">000.X.1050</span><span class="c st">01/Apr/2025 02:14 p....</span><span class="c fi">22/Apr/2025 02:14 p....</span><span class="c as">Not Started</span><span class="c ps">01/Apr/2025 02:14 p....</span><span class="c r pl">0h</span><span class="c r rl">0h</span><span class="c r rd">120h</span><span class="c r pd">120h</span></div>
<div class="row" style="top:297.15px"><span class="ab" style="left:80.3px"></span><span class="nm" style="left:97.6px;letter-spacing:-0.259px">Drill Soil Cement Piers (...</span><svg class="cm" width="15" height="15" viewBox="0 0 15 15"><path d="M1.2 1.2H13.5V12.8L11 10.2H1.2Z" fill="none" stroke="#2a7c9c" stroke-width="1.4" stroke-linejoin="miter"/></svg><span class="c id">000.X.1060</span><span class="c st">11/Mar/2025 02:14 p....</span><span class="c fi">22/Apr/2025 02:14 p....</span><span class="c as">Not Started</span><span class="c ps">11/Mar/2025 02:14 p....</span><span class="c r pl">0h</span><span class="c r rl">0h</span><span class="c r rd">240h</span><span class="c r pd">240h</span></div>
<div class="row" style="top:316.90px"><svg class="tg" style="left:54.0px" width="12" height="12" viewBox="0 0 12 12"><circle cx="6" cy="6" r="4.9" fill="none" stroke="#5a5a5a" stroke-width="1"/><path d="M3.6 6h4.8" stroke="#333" stroke-width="1"/></svg><svg class="wi" style="left:72.2px" width="14" height="14" viewBox="0 0 14 14"><rect x="0" y="0" width="8.5" height="8" rx="1" fill="#3a3a3a"/><rect x="4" y="4" width="9" height="9" rx="1" fill="#fff"/><rect x="5" y="5" width="8" height="8" rx="1" fill="#3a3a3a"/></svg><span class="nm" style="left:89.8px;max-width:179.5px;letter-spacing:-0.315px">6 - Site Prep: Shoring &amp; Excava...</span><span class="c id">6</span><span class="c st">27/Sep/2024 02:14 p....</span><span class="c fi">19/Sep/2025 02:14 p....</span><span class="c as"></span><span class="c ps">27/Sep/2024 02:14 p....</span><span class="c r pl">0h</span><span class="c r rl">0h</span><span class="c r rd">1,968h</span><span class="c r pd">1,968h</span></div>
<div class="row" style="top:336.65px"><svg class="tg" style="left:61.8px" width="12" height="12" viewBox="0 0 12 12"><circle cx="6" cy="6" r="4.9" fill="none" stroke="#5a5a5a" stroke-width="1"/><path d="M3.6 6h4.8" stroke="#333" stroke-width="1"/></svg><svg class="wi" style="left:80.0px" width="14" height="14" viewBox="0 0 14 14"><rect x="0" y="0" width="8.5" height="8" rx="1" fill="#3a3a3a"/><rect x="4" y="4" width="9" height="9" rx="1" fill="#fff"/><rect x="5" y="5" width="8" height="8" rx="1" fill="#3a3a3a"/></svg><span class="nm" style="left:97.6px;max-width:171.7px;letter-spacing:-0.322px">B1 - Site Prep: Shoring &amp; Exca...</span><span class="c id">B1</span><span class="c st">27/Sep/2024 02:14 p....</span><span class="c fi">13/May/2025 02:14 p....</span><span class="c as"></span><span class="c ps">27/Sep/2024 02:14 p....</span><span class="c r pl">0h</span><span class="c r rl">0h</span><span class="c r rd">1,248h</span><span class="c r pd">1,248h</span></div>
<div class="row" style="top:356.40px"><span class="ab" style="left:88.3px"></span><span class="nm" style="left:105.6px;letter-spacing:-0.055px">New Activity</span><svg class="cm" width="15" height="15" viewBox="0 0 15 15"><path d="M1.2 1.2H13.5V12.8L11 10.2H1.2Z" fill="none" stroke="#2a7c9c" stroke-width="1.4" stroke-linejoin="miter"/></svg><span class="c id">A1000</span><span class="c st">27/Sep/2024 02:14 p....</span><span class="c fi">08/Nov/2024 02:14 p....</span><span class="c as">Not Started</span><span class="c ps">27/Sep/2024 02:14 p....</span><span class="c r pl">0h</span><span class="c r rl">0h</span><span class="c r rd">240h</span><span class="c r pd">240h</span></div>
<div class="row" style="top:376.15px"><span class="ab" style="left:88.3px"></span><span class="nm" style="left:105.6px;letter-spacing:-0.321px">Shore &amp; Excavate - Are...</span><svg class="cm" width="15" height="15" viewBox="0 0 15 15"><path d="M1.2 1.2H13.5V12.8L11 10.2H1.2Z" fill="none" stroke="#2a7c9c" stroke-width="1.4" stroke-linejoin="miter"/></svg><span class="c id">AB1.X.1000</span><span class="c st">01/Apr/2025 02:14 p....</span><span class="c fi">08/Apr/2025 02:14 p....</span><span class="c as">Not Started</span><span class="c ps">01/Apr/2025 02:14 p....</span><span class="c r pl">0h</span><span class="c r rl">0h</span><span class="c r rd">40h</span><span class="c r pd">40h</span></div>
<div class="row" style="top:395.90px"><span class="ab" style="left:88.3px"></span><span class="nm" style="left:105.6px;letter-spacing:-0.321px">Shore &amp; Excavate - Are...</span><svg class="cm" width="15" height="15" viewBox="0 0 15 15"><path d="M1.2 1.2H13.5V12.8L11 10.2H1.2Z" fill="none" stroke="#2a7c9c" stroke-width="1.4" stroke-linejoin="miter"/></svg><span class="c id">AB1.X.1010</span><span class="c st">15/Apr/2025 02:14 p....</span><span class="c fi">22/Apr/2025 02:14 p....</span><span class="c as">Not Started</span><span class="c ps">15/Apr/2025 02:14 p....</span><span class="c r pl">0h</span><span class="c r rl">0h</span><span class="c r rd">40h</span><span class="c r pd">40h</span></div>
<div class="row" style="top:415.65px"><span class="ab" style="left:88.3px"></span><span class="nm" style="left:105.6px;letter-spacing:-0.321px">Shore &amp; Excavate - Are...</span><svg class="cm" width="15" height="15" viewBox="0 0 15 15"><path d="M1.2 1.2H13.5V12.8L11 10.2H1.2Z" fill="none" stroke="#2a7c9c" stroke-width="1.4" stroke-linejoin="miter"/></svg><span class="c id">AB1.X.1020</span><span class="c st">29/Apr/2025 02:14 p....</span><span class="c fi">06/May/2025 02:14 p....</span><span class="c as">Not Started</span><span class="c ps">29/Apr/2025 02:14 p....</span><span class="c r pl">0h</span><span class="c r rl">0h</span><span class="c r rd">40h</span><span class="c r pd">40h</span></div>
<div class="row" style="top:435.40px"><span class="ab" style="left:88.3px"></span><span class="nm" style="left:105.6px;letter-spacing:-0.321px">Shore &amp; Excavate - Are...</span><svg class="cm" width="15" height="15" viewBox="0 0 15 15"><path d="M1.2 1.2H13.5V12.8L11 10.2H1.2Z" fill="none" stroke="#2a7c9c" stroke-width="1.4" stroke-linejoin="miter"/></svg><span class="c id">BB1.X.1000</span><span class="c st">08/Apr/2025 02:14 p....</span><span class="c fi">15/Apr/2025 02:14 p....</span><span class="c as">Not Started</span><span class="c ps">08/Apr/2025 02:14 p....</span><span class="c r pl">0h</span><span class="c r rl">0h</span><span class="c r rd">40h</span><span class="c r pd">40h</span></div>
<div class="row" style="top:455.15px"><span class="ab" style="left:88.3px"></span><span class="nm" style="left:105.6px;letter-spacing:-0.321px">Shore &amp; Excavate - Are...</span><svg class="cm" width="15" height="15" viewBox="0 0 15 15"><path d="M1.2 1.2H13.5V12.8L11 10.2H1.2Z" fill="none" stroke="#2a7c9c" stroke-width="1.4" stroke-linejoin="miter"/></svg><span class="c id">BB1.X.1010</span><span class="c st">22/Apr/2025 02:14 p....</span><span class="c fi">29/Apr/2025 02:14 p....</span><span class="c as">Not Started</span><span class="c ps">22/Apr/2025 02:14 p....</span><span class="c r pl">0h</span><span class="c r rl">0h</span><span class="c r rd">40h</span><span class="c r pd">40h</span></div>
<div class="row" style="top:474.90px"><span class="ab" style="left:88.3px"></span><span class="nm" style="left:105.6px;letter-spacing:-0.321px">Shore &amp; Excavate - Are...</span><svg class="cm" width="15" height="15" viewBox="0 0 15 15"><path d="M1.2 1.2H13.5V12.8L11 10.2H1.2Z" fill="none" stroke="#2a7c9c" stroke-width="1.4" stroke-linejoin="miter"/></svg><span class="c id">BB1.X.1020</span><span class="c st">06/May/2025 02:14 p....</span><span class="c fi">13/May/2025 02:14 p....</span><span class="c as">Not Started</span><span class="c ps">06/May/2025 02:14 p....</span><span class="c r pl">0h</span><span class="c r rl">0h</span><span class="c r rd">40h</span><span class="c r pd">40h</span></div>
<div class="abs" style="left:23.2px;top:39.5px;width:221px;height:20px;border:2px solid #0d2230;z-index:6"></div>
<div class="abs" style="left:236.5px;top:54.5px;width:7.5px;height:7px;background:#3b5768;border:1.3px solid #0d2230;z-index:7"></div>
<svg class="abs" style="left:4.3px;top:42.3px;z-index:6" width="14.5" height="14.5" viewBox="0 0 18 18"><path d="M14.64 6.95L17.01 7.24L17.01 10.76L14.64 11.05L14.44 11.54L15.91 13.42L13.42 15.91L11.54 14.44L11.05 14.64L10.76 17.01L7.24 17.01L6.95 14.64L6.46 14.44L4.58 15.91L2.09 13.42L3.56 11.54L3.36 11.05L0.99 10.76L0.99 7.24L3.36 6.95L3.56 6.46L2.09 4.58L4.58 2.09L6.46 3.56L6.95 3.36L7.24 0.99L10.76 0.99L11.05 3.36L11.54 3.56L13.42 2.09L15.91 4.58L14.44 6.46Z" fill="none" stroke="#5a6968" stroke-width="1.7" stroke-linejoin="round"/><circle cx="9" cy="9" r="2.5" fill="none" stroke="#5a6968" stroke-width="1.6"/></svg>
</div>
<div class="abs" style="left:80px;top:668.3px;width:9px;height:2px;background:#111;border-radius:1px"></div>
<div class="abs" style="left:2488px;top:172px;width:1px;height:498px;background:#ececec"></div>
<div id="sb"></div>
<div class="abs" style="left:0;top:669.8px;width:2487px;height:1px;background:#e2e2e2"></div>
<div id="ft">
  <span class="tbt" style="left:23px;top:8px;font-size:11.5px;color:#333;letter-spacing:-0.45px">Total: 1355</span>
  <div class="sep" style="left:85px;top:4.5px;height:19px;background:#e3e3e3"></div>
  <svg class="abs" style="left:95.5px;top:8px" width="14" height="14" viewBox="0 0 14 14"><path d="M7 1V9.5M3.8 6.5L7 9.7L10.2 6.5M1 9V12.8H13V9" fill="none" stroke="#2271a5" stroke-width="1.3"/></svg>
  <span class="tbt" style="left:112.2px;top:8px;font-size:11.5px;color:#1f6ca3;letter-spacing:-0.25px">Download</span>
  <div class="sep" style="left:171.5px;top:4.5px;height:19px;background:#e3e3e3"></div>
  <svg class="abs" style="left:183px;top:7.5px" width="15" height="15" viewBox="0 0 15 15"><g fill="none" stroke="#555" stroke-width="1"><rect x="0.5" y="0.5" width="10" height="9"/><path d="M0.5 3.5H10.5M0.5 6.5H10.5M4 0.5V9.5M7 0.5V9.5"/></g><circle cx="11" cy="11" r="3" fill="#555"/></svg>
  <div class="sep" style="left:206px;top:4.5px;height:19px;background:#e3e3e3"></div>
  <svg class="abs" style="left:217.5px;top:9.5px" width="15" height="10" viewBox="0 0 15 10"><path d="M0.8 5C3 1.8 5 0.8 7.5 0.8C10 0.8 12 1.8 14.2 5C12 8.2 10 9.2 7.5 9.2C5 9.2 3 8.2 0.8 5Z" fill="none" stroke="#555" stroke-width="1.1"/><circle cx="7.5" cy="5" r="2.1" fill="none" stroke="#555" stroke-width="1.1"/></svg>
  <span class="tbt" style="left:240.6px;top:8px;font-size:11.5px;color:#333;letter-spacing:-0.2px">Hide empty groups</span>
</div>
<div id="ftb"></div>
<div id="tabs">
  <svg class="abs" style="left:7px;top:6.5px" width="17" height="17" viewBox="0 0 17 17"><circle cx="8.5" cy="8.5" r="7.6" fill="none" stroke="#444" stroke-width="1.1"/><path d="M5.5 7.3L8.5 10.2L11.5 7.3" fill="none" stroke="#444" stroke-width="1.1"/></svg>
  <span class="tab" style="left:31px;top:9px">Activity Details</span>
  <svg class="abs" style="left:117.5px;top:11px" width="8" height="5"><path d="M0.3 0.3H7.7L4 4.3Z" fill="#333"/></svg>
  <div class="sep" style="left:134px;top:0;height:28px;background:#dedede"></div>
  <span class="tab" style="left:149.5px;font-weight:bold;color:#161513">General</span>
  <div class="abs" style="left:134px;top:25.6px;width:74px;height:2.6px;background:#3d7a2f"></div>
  <span class="tab" style="left:222.6px">Status</span>
  <span class="tab" style="left:285.6px">Resource Assignments</span>
  <span class="tab" style="left:436.5px">Relationships</span>
  <span class="tab" style="left:537.5px">Codes</span>
  <span class="tab" style="left:600.5px">Tasks</span>
  <span class="tab" style="left:659.5px">Trace Logic</span>
  <span class="tab" style="left:749.5px">Stored Periods</span>
  <svg class="abs" style="left:2482.5px;top:4.5px" width="18" height="18" viewBox="0 0 18 18"><path d="M14.64 6.95L17.01 7.24L17.01 10.76L14.64 11.05L14.44 11.54L15.91 13.42L13.42 15.91L11.54 14.44L11.05 14.64L10.76 17.01L7.24 17.01L6.95 14.64L6.46 14.44L4.58 15.91L2.09 13.42L3.56 11.54L3.36 11.05L0.99 10.76L0.99 7.24L3.36 6.95L3.56 6.46L2.09 4.58L4.58 2.09L6.46 3.56L6.95 3.36L7.24 0.99L10.76 0.99L11.05 3.36L11.54 3.56L13.42 2.09L15.91 4.58L14.44 6.46Z" fill="none" stroke="#3d4a4a" stroke-width="1.3" stroke-linejoin="round"/><circle cx="9" cy="9" r="2.3" fill="none" stroke="#3d4a4a" stroke-width="1.3"/></svg>
</div>
<span class="lbl" style="left:11.2px;top:744.5px">Name <svg width="7" height="7" viewBox="0 0 7 7" style="vertical-align:top;position:relative;top:1.8px;margin-left:0px"><path d="M3.5 0.6V6.4M1 2L6 5M1 5L6 2" stroke="#c0392b" stroke-width="1.7"/></svg></span>
<div class="inp" style="left:11px;top:760px;width:1214px;">Notice to Proceed - Pre-Construction</div>
<span class="lbl" style="left:1278px;top:744.5px">ID <svg width="7" height="7" viewBox="0 0 7 7" style="vertical-align:top;position:relative;top:1.8px;margin-left:0px"><path d="M3.5 0.6V6.4M1 2L6 5M1 5L6 2" stroke="#c0392b" stroke-width="1.7"/></svg></span>
<div class="inp" style="left:1278px;top:760px;width:581px;">000.0.0000</div>
<span class="lbl" style="left:1911.4px;top:744.5px">Owner</span>
<div class="inp" style="left:1911.5px;top:760px;width:580.5px;color:#6a6a6a;">Search<svg class="dots" width="13" height="4" viewBox="0 0 13 4"><circle cx="2" cy="2" r="1.5" fill="#222"/><circle cx="6.5" cy="2" r="1.5" fill="#222"/><circle cx="11" cy="2" r="1.5" fill="#222"/></svg></div>
<span class="lbl" style="left:11.2px;top:809.5px">Project ID <svg width="7" height="7" viewBox="0 0 7 7" style="vertical-align:top;position:relative;top:1.8px;margin-left:0px"><path d="M3.5 0.6V6.4M1 2L6 5M1 5L6 2" stroke="#c0392b" stroke-width="1.7"/></svg></span>
<div class="inp dis" style="left:11px;top:825.5px;width:580.5px;">18001-00</div>
<span class="lbl" style="left:644px;top:809.5px">WBS <svg width="7" height="7" viewBox="0 0 7 7" style="vertical-align:top;position:relative;top:1.8px;margin-left:0px"><path d="M3.5 0.6V6.4M1 2L6 5M1 5L6 2" stroke="#c0392b" stroke-width="1.7"/></svg></span>
<div class="inp" style="left:644px;top:825.5px;width:581px;">1 - Summary<svg class="dots" width="13" height="4" viewBox="0 0 13 4"><circle cx="2" cy="2" r="1.5" fill="#222"/><circle cx="6.5" cy="2" r="1.5" fill="#222"/><circle cx="11" cy="2" r="1.5" fill="#222"/></svg></div>
<span class="lbl" style="left:1278px;top:809.5px">Work Package</span>
<div class="inp" style="left:1278px;top:825.5px;width:581px;color:#6a6a6a;">Search<svg class="dots" width="13" height="4" viewBox="0 0 13 4"><circle cx="2" cy="2" r="1.5" fill="#222"/><circle cx="6.5" cy="2" r="1.5" fill="#222"/><circle cx="11" cy="2" r="1.5" fill="#222"/></svg></div>
<span class="lbl" style="left:1911.4px;top:809.5px">Calendar <svg width="7" height="7" viewBox="0 0 7 7" style="vertical-align:top;position:relative;top:1.8px;margin-left:0px"><path d="M3.5 0.6V6.4M1 2L6 5M1 5L6 2" stroke="#c0392b" stroke-width="1.7"/></svg></span>
<div class="inp" style="left:1911.5px;top:825.5px;width:580.5px;">66001 - 66001<svg class="dots" width="13" height="4" viewBox="0 0 13 4"><circle cx="2" cy="2" r="1.5" fill="#222"/><circle cx="6.5" cy="2" r="1.5" fill="#222"/><circle cx="11" cy="2" r="1.5" fill="#222"/></svg></div>
<span class="lbl" style="left:11.2px;top:874.5px">Type</span>
<div class="inp" style="left:11px;top:890.5px;width:580.5px;"><span style="padding-left:3px">Activity Dependent</span><span class="caret"></span></div>
<span class="lbl" style="left:644px;top:874.5px">Duration Type</span>
<div class="inp" style="left:644px;top:890.5px;width:581px;"><span style="padding-left:4px">Fixed Duration &amp; Units</span><span class="caret"></span></div>
<span class="lbl" style="left:1278px;top:874.5px">Percent Complete Type</span>
<div class="inp" style="left:1278px;top:890.5px;width:581px;"><span style="padding-left:4px">Physical</span><span class="caret"></span></div>
<div class="abs" style="left:21px;top:928px;width:15px;height:15px;border:1px solid #555;border-radius:1px;background:#fff"></div>
<span class="lbl" style="left:40.6px;top:929px;font-size:12px">Program Milestone</span>

</body></html>
